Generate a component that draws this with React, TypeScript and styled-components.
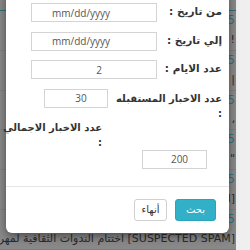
import React from "react";
import styled, { createGlobalStyle } from "styled-components";

const Global = createGlobalStyle`
  html, body { margin: 0; padding: 0; overflow: hidden; }
  body { width: 250px; height: 250px; }
`;

const Stage = styled.div`
  position: relative;
  width: 250px;
  height: 250px;
  overflow: hidden;
  display: flex;
  background: #888;
`;

const Page = styled.div`
  width: 236px;
  display: flex;
  flex-direction: column;
  border-top: 10px solid #888;
`;

const HeaderLine = styled.div`
  height: 1px;
  background: #2f6f78;
`;

const ListRow = styled.div`
  height: 39px;
  border-bottom: 1px solid #7e7e7e;
  direction: rtl;
  display: flex;
  flex-direction: column;
  padding-right: 1px;
  font-family: "DejaVu Sans", sans-serif;
  font-size: 11px;
  line-height: 19px;
  white-space: nowrap;
  overflow: hidden;
`;

const Num = styled.div`
  color: #2f7480;
  font-size: 12px;
`;

const Title = styled.div`
  color: #2a2a2a;
`;

const Scrollbar = styled.div`
  flex: 1;
  background: #efefef;
`;

const Modal = styled.div`
  position: absolute;
  left: 6px;
  top: -10px;
  width: 223px;
  background: #fff;
  border-radius: 6px;
  box-shadow: 0 3px 9px rgba(0, 0, 0, 0.45);
  font-family: "DejaVu Sans", sans-serif;
`;

const Body = styled.div`
  padding: 13px 7px 17px 0;
  display: flex;
  flex-direction: column;
`;

const FieldRow = styled.div`
  direction: rtl;
  display: flex;
  align-items: center;
  height: 19px;
  margin-bottom: 9.5px;
`;

const Label = styled.label<{ $w: number }>`
  width: ${(p) => p.$w}px;
  flex: none;
  font-weight: bold;
  font-size: 10.5px;
  line-height: 15px;
  margin-top: -2px;
  color: #333;
  text-align: right;
  white-space: nowrap;
`;

const Input = styled.input<{ $w: number; $num?: boolean; $ms?: number }>`
  box-sizing: border-box;
  width: ${(p) => p.$w}px;
  height: 19px;
  flex: none;
  margin: 0;
  margin-right: ${(p) => p.$ms ?? 8}px;
  border: 1px solid #d4d4d4;
  border-radius: 0;
  background: #fff;
  outline: none;
  color: #555;
  font-family: "Open Sans", sans-serif;
  font-size: 10px;
  direction: ltr;
  text-align: ${(p) => (p.$num ? "center" : "left")};
  padding: ${(p) => (p.$num ? "0 0 0 10px" : "0 0 0 20px")};
`;

const TallRow = styled.div`
  direction: rtl;
  display: flex;
  align-items: flex-start;
  height: 30px;
`;

const StackLabel = styled.div<{ $w: number; $mr?: number; $pt?: number }>`
  width: ${(p) => p.$w}px;
  flex: none;
  margin-right: ${(p) => p.$mr ?? 0}px;
  padding-top: ${(p) => p.$pt ?? 2}px;
  font-weight: bold;
  font-size: 10px;
  color: #333;
  text-align: right;
  white-space: nowrap;
  direction: rtl;
`;

const Line = styled.div`
  height: 15px;
  line-height: 15px;
`;

const InputRow = styled.div`
  direction: rtl;
  display: flex;
`;

const Footer = styled.div`
  border-top: 1px solid #e5e5e5;
  padding: 12px 13px 12px;
  direction: rtl;
  display: flex;
  gap: 8px;
`;

const Button = styled.button<{ $primary?: boolean; $w: number }>`
  width: ${(p) => p.$w}px;
  height: 22px;
  border-radius: 3px;
  border: 1px solid ${(p) => (p.$primary ? "#2aa3bb" : "#d0d0d0")};
  background: ${(p) => (p.$primary ? "#31b0c8" : "#fff")};
  color: ${(p) => (p.$primary ? "#fff" : "#333")};
  font-family: "DejaVu Sans", sans-serif;
  font-size: 10px;
  padding: 0;
  cursor: pointer;
`;

const rows = [
  { n: "15", t: "! الخبر الأول من الأخبار" },
  { n: "15", t: "| الخبر الثاني من الأخبار" },
  { n: "15", t: "، الخبر الثالث من الأخبار" },
  { n: "15", t: "\" الخبر الرابع من الأخبار" },
  { n: "15", t: "[SUSPECTED SPAM] خبر آخر" },
  { n: "15", t: "[SUSPECTED SPAM] اختتام الندوات الثقافية لمهرجان ..." },
];

export default function App() {
  return (
    <>
      <Global />
      <Stage>
        <Page>
          <HeaderLine />
          {rows.map((r, i) => (
            <ListRow key={i}>
              <Num>{r.n}</Num>
              <Title>{r.t}</Title>
            </ListRow>
          ))}
        </Page>
        <Scrollbar />
        <Modal>
          <Body>
            <FieldRow>
              <Label $w={57}>من تاريخ :</Label>
              <Input $w={126} defaultValue="mm/dd/yyyy" />
            </FieldRow>
            <FieldRow>
              <Label $w={57}>إلي تاريخ :</Label>
              <Input $w={126} defaultValue="mm/dd/yyyy" />
            </FieldRow>
            <FieldRow>
              <Label $w={57}>عدد الايام :</Label>
              <Input $w={126} $num defaultValue="2" />
            </FieldRow>
            <TallRow>
              <StackLabel $w={102}>
                <Line>عدد الاخبار المستقبله</Line>
                <Line>:</Line>
              </StackLabel>
              <Input $w={64} $num $ms={12} defaultValue="30" />
            </TallRow>
            <StackLabel $w={96} $mr={104} $pt={1}>
              <Line>عدد الاخبار الاجمالي</Line>
              <Line>:</Line>
            </StackLabel>
            <InputRow>
              <Input $w={65} $num $ms={15} defaultValue="200" />
            </InputRow>
          </Body>
          <Footer>
            <Button $primary $w={41}>بحث</Button>
            <Button $w={33}>أنهاء</Button>
          </Footer>
        </Modal>
      </Stage>
    </>
  );
}
